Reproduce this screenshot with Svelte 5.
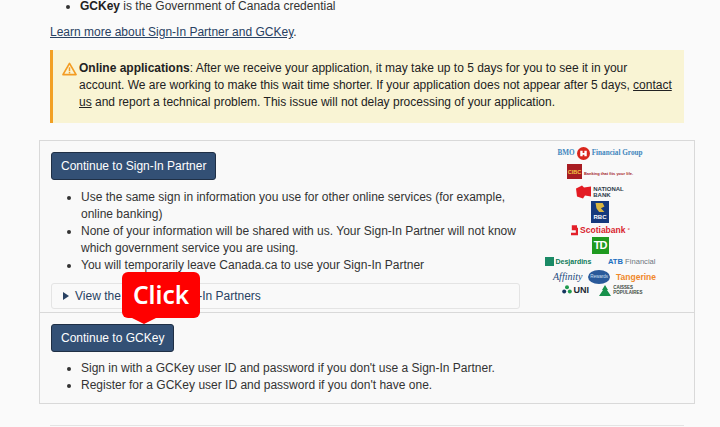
<script>
  const partnerPoints = [
    'Use the same sign in information you use for other online services (for example, online banking)',
    'None of your information will be shared with us. Your Sign-In Partner will not know which government service you are using.',
    'You will temporarily leave Canada.ca to use your Sign-In Partner'
  ]
  const gckeyPoints = [
    "Sign in with a GCKey user ID and password if you don't use a Sign-In Partner.",
    "Register for a GCKey user ID and password if you don't have one."
  ]
</script>

<main class="page">
  <ul class="intro">
    <li><strong>GCKey</strong> is the Government of Canada credential</li>
  </ul>
  <p class="learn"><a href="#top">Learn more about Sign-In Partner and GCKey</a>.</p>

  <div class="alert">
    <svg class="warn" viewBox="0 0 16 15" width="15" height="14" aria-hidden="true">
      <path d="M8 1.5 L15 13.5 H1 Z" fill="none" stroke="#f39c24" stroke-width="1.8" stroke-linejoin="round" />
      <path d="M8 5.5 V9.8 M8 10.8 V12.2" stroke="#f39c24" stroke-width="1.6" />
    </svg>
    <p><strong>Online applications</strong>: After we receive your application, it may take up to 5 days for you to see it in your account. We are working to make this wait time shorter. If your application does not appear after 5 days, <a href="#top">contact us</a> and report a technical problem. This issue will not delay processing of your application.</p>
  </div>

  <section class="panel">
    <div class="partner">
      <div class="partner-main">
        <button class="btn">Continue to Sign-In Partner</button>
        <ul>
          {#each partnerPoints as point}
            <li>{point}</li>
          {/each}
        </ul>
        <div class="details">
          <span class="arrow"></span>
          <span>View the full list of Sign-In Partners</span>
        </div>
      </div>

      <div class="logos">
        <div class="row bmo">
          <span class="serif">BMO</span>
          <svg viewBox="0 0 12 12" width="13" height="13" aria-hidden="true">
            <circle cx="6" cy="6" r="6" fill="#d9261c" />
            <path d="M3 3.5h2.2v2H6.8v-2H9v5H6.8v-1.4H5.2v1.4H3Z" fill="#fff" />
          </svg>
          <span class="serif">Financial Group</span>
        </div>
        <div class="row cibc">
          <span class="cibc-mark">CIBC</span>
          <span class="cibc-tag">Banking that fits your life.</span>
        </div>
        <div class="row national">
          <svg viewBox="0 0 15 13" width="15" height="14" aria-hidden="true">
            <path d="M0 3 L6 0 L8 2 L15 1 V11 L9 10 L7 13 L1 11 Z" fill="#e31b23" />
          </svg>
          <span>NATIONAL<br />BANK</span>
        </div>
        <div class="row rbc-row">
          <span class="rbc">
            <svg viewBox="0 0 18 13" width="16" height="12" aria-hidden="true">
              <path d="M4 2 H12 L14 6 L10 8 L14 12 H8 L5 8 Z" fill="#d9b640" />
            </svg>
            <b>RBC</b>
          </span>
        </div>
        <div class="row scotia">
          <svg viewBox="0 0 8 12" width="8" height="12" aria-hidden="true">
            <path d="M7 2.5 H3 V5 H7 V10 H1" fill="none" stroke="#e3202a" stroke-width="2.4" />
          </svg>
          <span>Scotiabank</span><sup>°</sup>
        </div>
        <div class="row td-row"><span class="td">TD</span></div>
        <div class="row split desj-row">
          <span class="desj"><i></i>Desjardins</span>
          <span class="atb"><b>ATB</b> Financial</span>
        </div>
        <div class="row split loyalty-row">
          <span class="affinity">Affinity</span>
          <span class="rewards">Rewards</span>
          <span class="tangerine">Tangerine</span>
        </div>
        <div class="row split uni-row">
          <span class="uni">
            <svg viewBox="0 0 10 10" width="10" height="10" aria-hidden="true">
              <circle cx="5" cy="2.2" r="2" fill="#1f9a4d" />
              <circle cx="2.2" cy="6.5" r="2" fill="#15365f" />
              <circle cx="7.8" cy="6.5" r="2" fill="#1f9a4d" />
            </svg>
            UNI
          </span>
          <span class="caisses">
            <svg viewBox="0 0 12 11" width="12" height="11" aria-hidden="true">
              <path d="M6 0 L9 5 H8 L12 11 H0 L4 5 H3 Z" fill="#17914b" />
            </svg>
            <span>CAISSES<br />POPULAIRES</span>
          </span>
        </div>
      </div>
    </div>

    <div class="gckey">
      <button class="btn">Continue to GCKey</button>
      <ul>
        {#each gckeyPoints as point}
          <li>{point}</li>
        {/each}
      </ul>
      <div class="callout">Click</div>
    </div>
  </section>

  <div class="next"></div>
</main>

<style>
  :global(body) {
    margin: 0;
    background: #fafafa;
    overflow: hidden;
  }

  .page {
    height: 427px;
    overflow: hidden;
    box-sizing: border-box;
    padding: 0 25px 0 39px;
    font-family: "Liberation Sans", Arial, sans-serif;
    font-size: 12px;
    line-height: 17px;
    color: #333;
  }

  ul {
    margin: 0;
    padding-left: 30px;
  }

  a {
    color: #284162;
  }

  strong {
    color: #222;
  }

  .intro {
    margin: -2px 0 0 12px;
    padding-left: 29px;
  }

  .learn {
    margin: 9px 0 0 11px;
  }

  .alert {
    display: flex;
    gap: 2px;
    margin: 9px 11px 0 11px;
    height: 73px;
    box-sizing: border-box;
    padding: 10px 11px 0 9px;
    background: #f9f4d4;
    border-left: 3px solid #f2a024;
    color: #222;
  }

  .alert p {
    margin: 0;
  }

  .alert a {
    color: #222;
  }

  .warn {
    flex: none;
    margin-top: 2px;
  }

  .panel {
    margin-top: 17px;
    height: 264px;
    box-sizing: border-box;
    border: 1px solid #d9d9d9;
    background: #f9f9f9;
  }

  .partner {
    display: flex;
    height: 172px;
    box-sizing: border-box;
    padding: 11px 11px 0 11px;
    border-bottom: 1px solid #d9d9d9;
  }

  .partner-main {
    width: 469px;
    flex: none;
  }

  .partner-main ul {
    margin-top: 9px;
  }

  .btn {
    display: block;
    height: 28px;
    padding: 0 9px;
    border: 1px solid #1f2f45;
    border-radius: 3px;
    background: #335075;
    color: #fff;
    font: inherit;
  }

  .details {
    display: flex;
    align-items: center;
    gap: 6px;
    height: 26px;
    margin-top: 9px;
    box-sizing: border-box;
    padding-left: 11px;
    border: 1px solid #e4e4e4;
    border-radius: 3px;
    color: #284162;
  }

  .arrow {
    width: 0;
    height: 0;
    border-left: 6px solid #284162;
    border-top: 4px solid transparent;
    border-bottom: 4px solid transparent;
  }

  .logos {
    flex: 1;
    display: flex;
    flex-direction: column;
    align-items: center;
    margin: -7px 26px 0 23px;
    font-size: 7px;
    line-height: 8px;
  }

  .row {
    display: flex;
    align-items: center;
    justify-content: center;
    white-space: nowrap;
  }

  .split {
    justify-content: space-between;
  }

  .serif {
    font-family: "Liberation Serif", serif;
    font-weight: bold;
    color: #3f86bd;
    font-size: 7.2px;
  }

  .bmo {
    gap: 2px;
    height: 16px;
  }

  .cibc {
    gap: 2px;
    height: 15px;
    margin-top: 3px;
  }

  .cibc-mark {
    background: #a81c22;
    color: #f3c844;
    font-size: 5.5px;
    font-weight: bold;
    width: 15px;
    height: 15px;
    display: flex;
    align-items: center;
    justify-content: center;
  }

  .cibc-tag {
    color: #a5232a;
    font-size: 4px;
    font-weight: bold;
    margin-top: 5px;
  }

  .national {
    gap: 2px;
    height: 14px;
    margin-top: 6px;
    color: #2c3a4a;
    font-size: 6px;
    line-height: 6.5px;
    font-weight: bold;
  }

  .rbc-row {
    margin-top: 2px;
  }

  .rbc {
    width: 18px;
    height: 22px;
    background: #14397d;
    display: flex;
    flex-direction: column;
    align-items: center;
    color: #fff;
    font-size: 6px;
    line-height: 8px;
  }

  .scotia {
    gap: 2px;
    height: 12px;
    margin-top: 1px;
    color: #d8232c;
    font-size: 8.5px;
    font-weight: bold;
  }

  .scotia sup {
    font-size: 6px;
    line-height: 0;
    color: #d8232c;
  }

  .td-row {
    margin-top: 1px;
  }

  .td {
    width: 17px;
    height: 17px;
    background: #1f9a1f;
    color: #fff;
    font-size: 11px;
    line-height: 17px;
    text-align: center;
    font-weight: bold;
    letter-spacing: -1px;
  }

  .desj-row {
    margin-top: 2px;
    height: 11px;
    width: 111px;
  }

  .desj {
    display: flex;
    align-items: center;
    gap: 2px;
    color: #0e7a58;
    font-weight: bold;
    font-size: 7px;
  }

  .desj i {
    width: 9px;
    height: 9px;
    background: #1b8a66;
  }

  .atb {
    color: #6d7780;
    font-size: 7.6px;
  }

  .atb b {
    color: #1b6fc0;
  }

  .loyalty-row {
    margin: 2px 0 0 9px;
    height: 15px;
    width: 103px;
  }

  .affinity {
    font-family: "Liberation Serif", serif;
    font-style: italic;
    font-size: 10px;
    color: #1d4a7d;
  }

  .rewards {
    width: 22px;
    height: 14px;
    border-radius: 50%;
    background: #2a5a9a;
    color: #cfe0f2;
    font-size: 4.5px;
    line-height: 14px;
    text-align: center;
    overflow: hidden;
  }

  .tangerine {
    color: #f0872a;
    font-weight: bold;
    font-size: 8.5px;
  }

  .uni-row {
    margin: 0 0 0 4px;
    height: 12px;
    width: 81px;
  }

  .uni {
    display: flex;
    align-items: center;
    gap: 2px;
    font-size: 9px;
    font-weight: bold;
    color: #1c2733;
  }

  .caisses {
    display: flex;
    align-items: center;
    gap: 2px;
    font-size: 4.5px;
    line-height: 5px;
    font-weight: bold;
    color: #3a4a40;
  }

  .gckey {
    position: relative;
    padding: 11px 11px 0 11px;
  }

  .gckey ul {
    margin-top: 8px;
  }

  .callout {
    position: absolute;
    left: 82px;
    top: -41px;
    width: 78px;
    height: 46px;
    border-radius: 6px;
    background: #f00;
    color: #fff;
    font-family: "Noto Sans", sans-serif;
    font-size: 24.5px;
    font-weight: 600;
    line-height: 46px;
    text-align: center;
  }

  .callout::after {
    content: '';
    position: absolute;
    left: 10px;
    top: 100%;
    width: 0;
    border-top: 6px solid #f00;
    border-left: 12px solid transparent;
    border-right: 12px solid transparent;
  }

  .next {
    margin: 21px 11px 0;
    border-top: 1px solid #e4e4e4;
  }
</style>
